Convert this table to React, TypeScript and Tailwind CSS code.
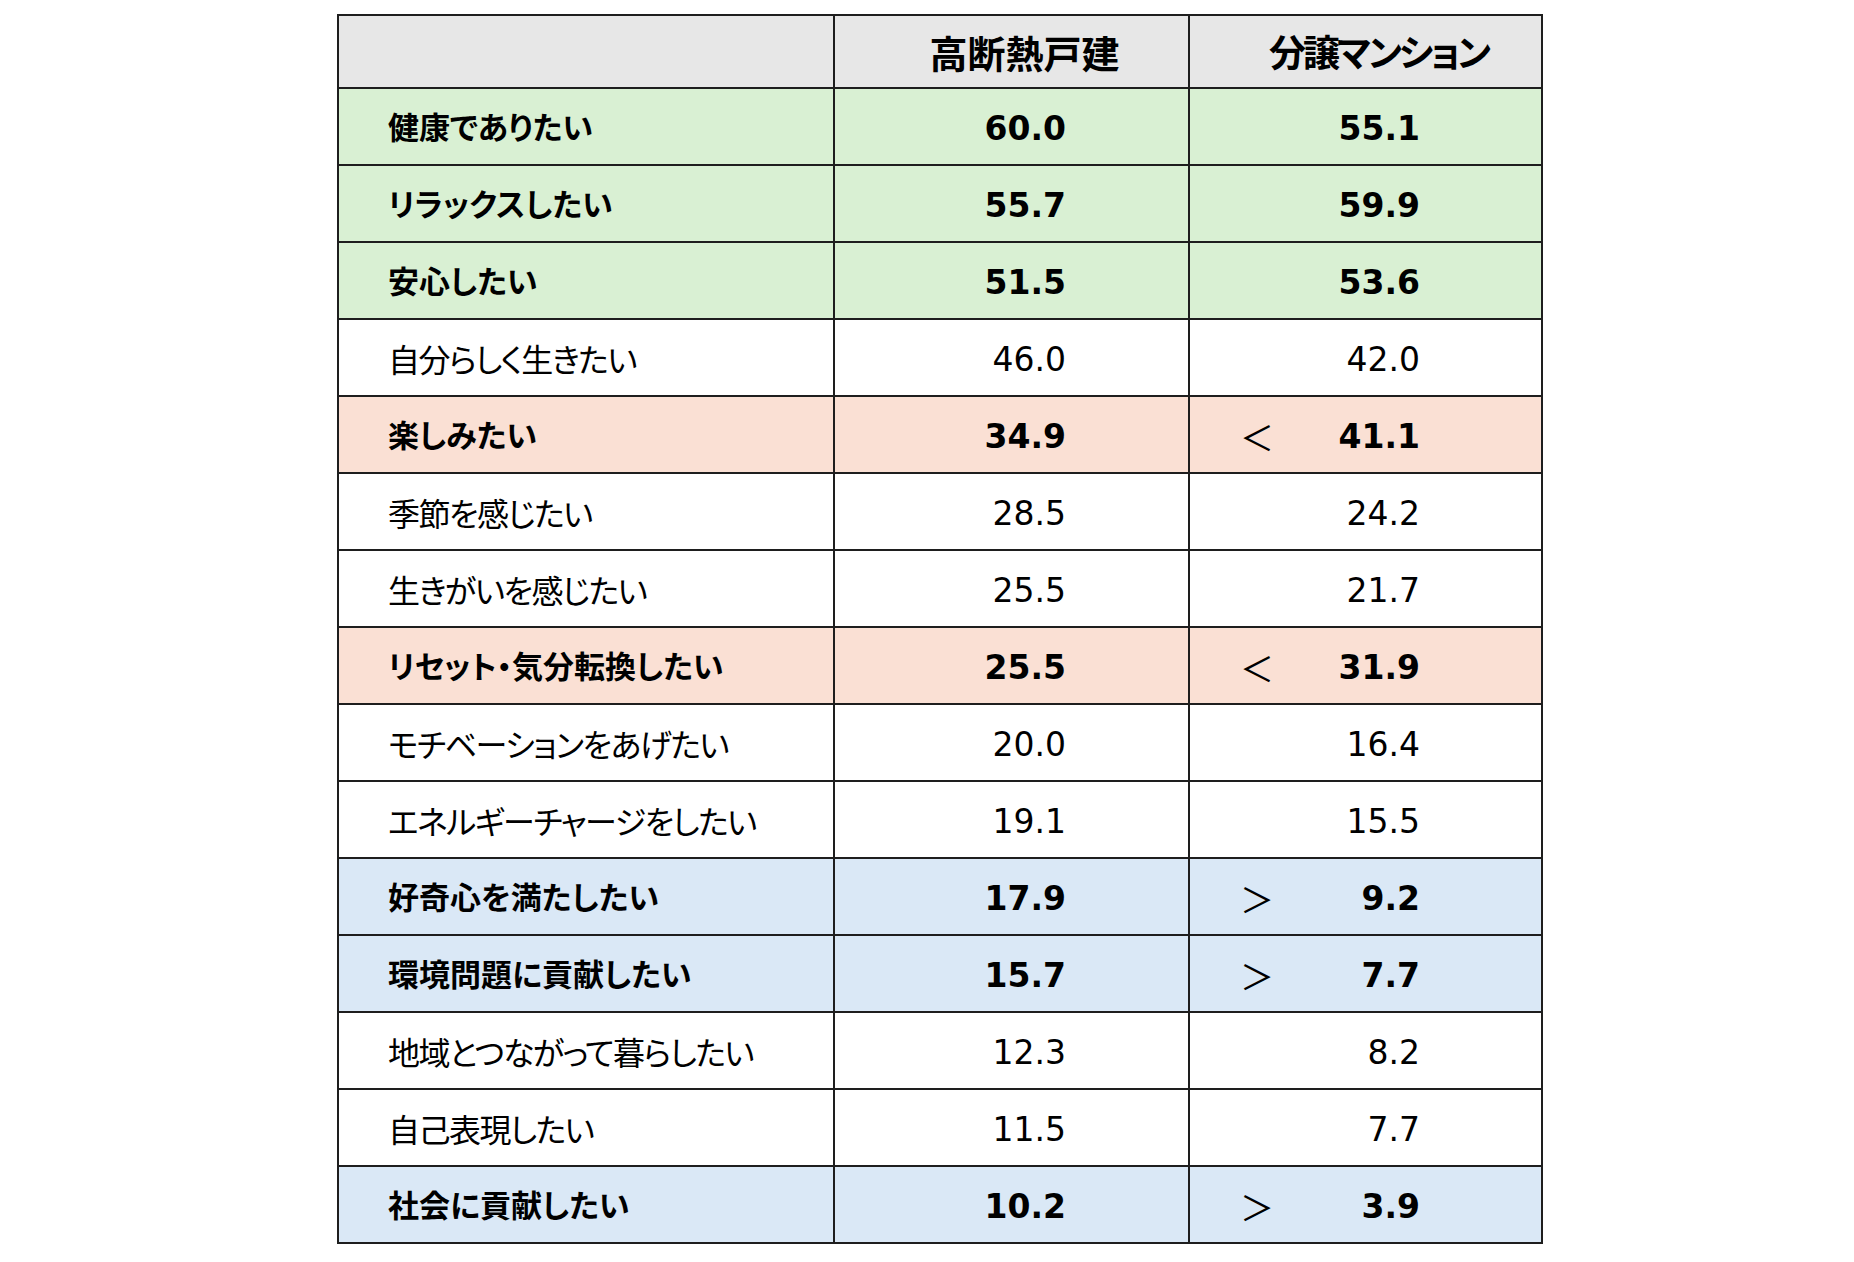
import React from 'react';

type Tone = 'green' | 'peach' | 'blue' | 'plain';

type Row = {
  label: string;
  house: string;
  condo: string;
  tone: Tone;
  mark?: '＜' | '＞';
};

const rows: Row[] = [
  { label: '健康でありたい', house: '60.0', condo: '55.1', tone: 'green' },
  { label: 'リラックスしたい', house: '55.7', condo: '59.9', tone: 'green' },
  { label: '安心したい', house: '51.5', condo: '53.6', tone: 'green' },
  { label: '自分らしく生きたい', house: '46.0', condo: '42.0', tone: 'plain' },
  { label: '楽しみたい', house: '34.9', condo: '41.1', tone: 'peach', mark: '＜' },
  { label: '季節を感じたい', house: '28.5', condo: '24.2', tone: 'plain' },
  { label: '生きがいを感じたい', house: '25.5', condo: '21.7', tone: 'plain' },
  { label: 'リセット・気分転換したい', house: '25.5', condo: '31.9', tone: 'peach', mark: '＜' },
  { label: 'モチベーションをあげたい', house: '20.0', condo: '16.4', tone: 'plain' },
  { label: 'エネルギーチャージをしたい', house: '19.1', condo: '15.5', tone: 'plain' },
  { label: '好奇心を満たしたい', house: '17.9', condo: '9.2', tone: 'blue', mark: '＞' },
  { label: '環境問題に貢献したい', house: '15.7', condo: '7.7', tone: 'blue', mark: '＞' },
  { label: '地域とつながって暮らしたい', house: '12.3', condo: '8.2', tone: 'plain' },
  { label: '自己表現したい', house: '11.5', condo: '7.7', tone: 'plain' },
  { label: '社会に貢献したい', house: '10.2', condo: '3.9', tone: 'blue', mark: '＞' },
];

const toneBg: Record<Tone, string> = {
  green: 'bg-[#d9f0d3]',
  peach: 'bg-[#fae0d4]',
  blue: 'bg-[#dae8f6]',
  plain: 'bg-white',
};

const jp = "font-['Noto_Sans_CJK_JP',sans-serif] [font-feature-settings:'palt']";
const num = "font-['DejaVu_Sans','Noto_Sans_CJK_JP',sans-serif]";

export default function App() {
  return (
    <div className="min-h-[1262px] w-[1854px] bg-white pl-[337px] pt-[14px] text-black">
      <div className="grid w-[1206px] grid-cols-[494px_353px_351px] gap-[2px] bg-[#1e1e1e] p-[2px]">
        {/* header */}
        <div className="h-[71px] bg-[#e7e7e7]" />
        <div className={`flex h-[71px] items-center justify-center bg-[#e7e7e7] pl-[26px] text-[38px] font-bold ${jp}`}>
          高断熱戸建
        </div>
        <div className={`flex h-[71px] items-center justify-center bg-[#e7e7e7] pl-[26px] text-[37px] font-bold tracking-[-3px] ${jp}`}>
          分譲マンション
        </div>

        {rows.map((r) => {
          const bold = r.tone !== 'plain';
          const bg = toneBg[r.tone];
          return (
            <React.Fragment key={r.label}>
              <div
                className={`flex h-[75px] items-center pl-[49px] ${bold ? 'text-[31px] font-bold' : 'text-[32px] font-normal tracking-[-1.5px]'} ${bg} ${jp}`}
              >
                {r.label}
              </div>
              <div
                className={`flex h-[75px] items-center justify-end pr-[122px] pt-[4px] text-[33px] ${bold ? 'font-bold' : 'font-normal'} ${bg} ${num}`}
              >
                {r.house}
              </div>
              <div className={`flex h-[75px] items-center pt-[4px] text-[33px] ${bg}`}>
                {r.mark && (
                  <span className={`pl-[50px] text-[34px] font-normal ${jp}`}>{r.mark}</span>
                )}
                <span className={`ml-auto pr-[121px] ${bold ? 'font-bold' : 'font-normal'} ${num}`}>
                  {r.condo}
                </span>
              </div>
            </React.Fragment>
          );
        })}
      </div>
    </div>
  );
}
